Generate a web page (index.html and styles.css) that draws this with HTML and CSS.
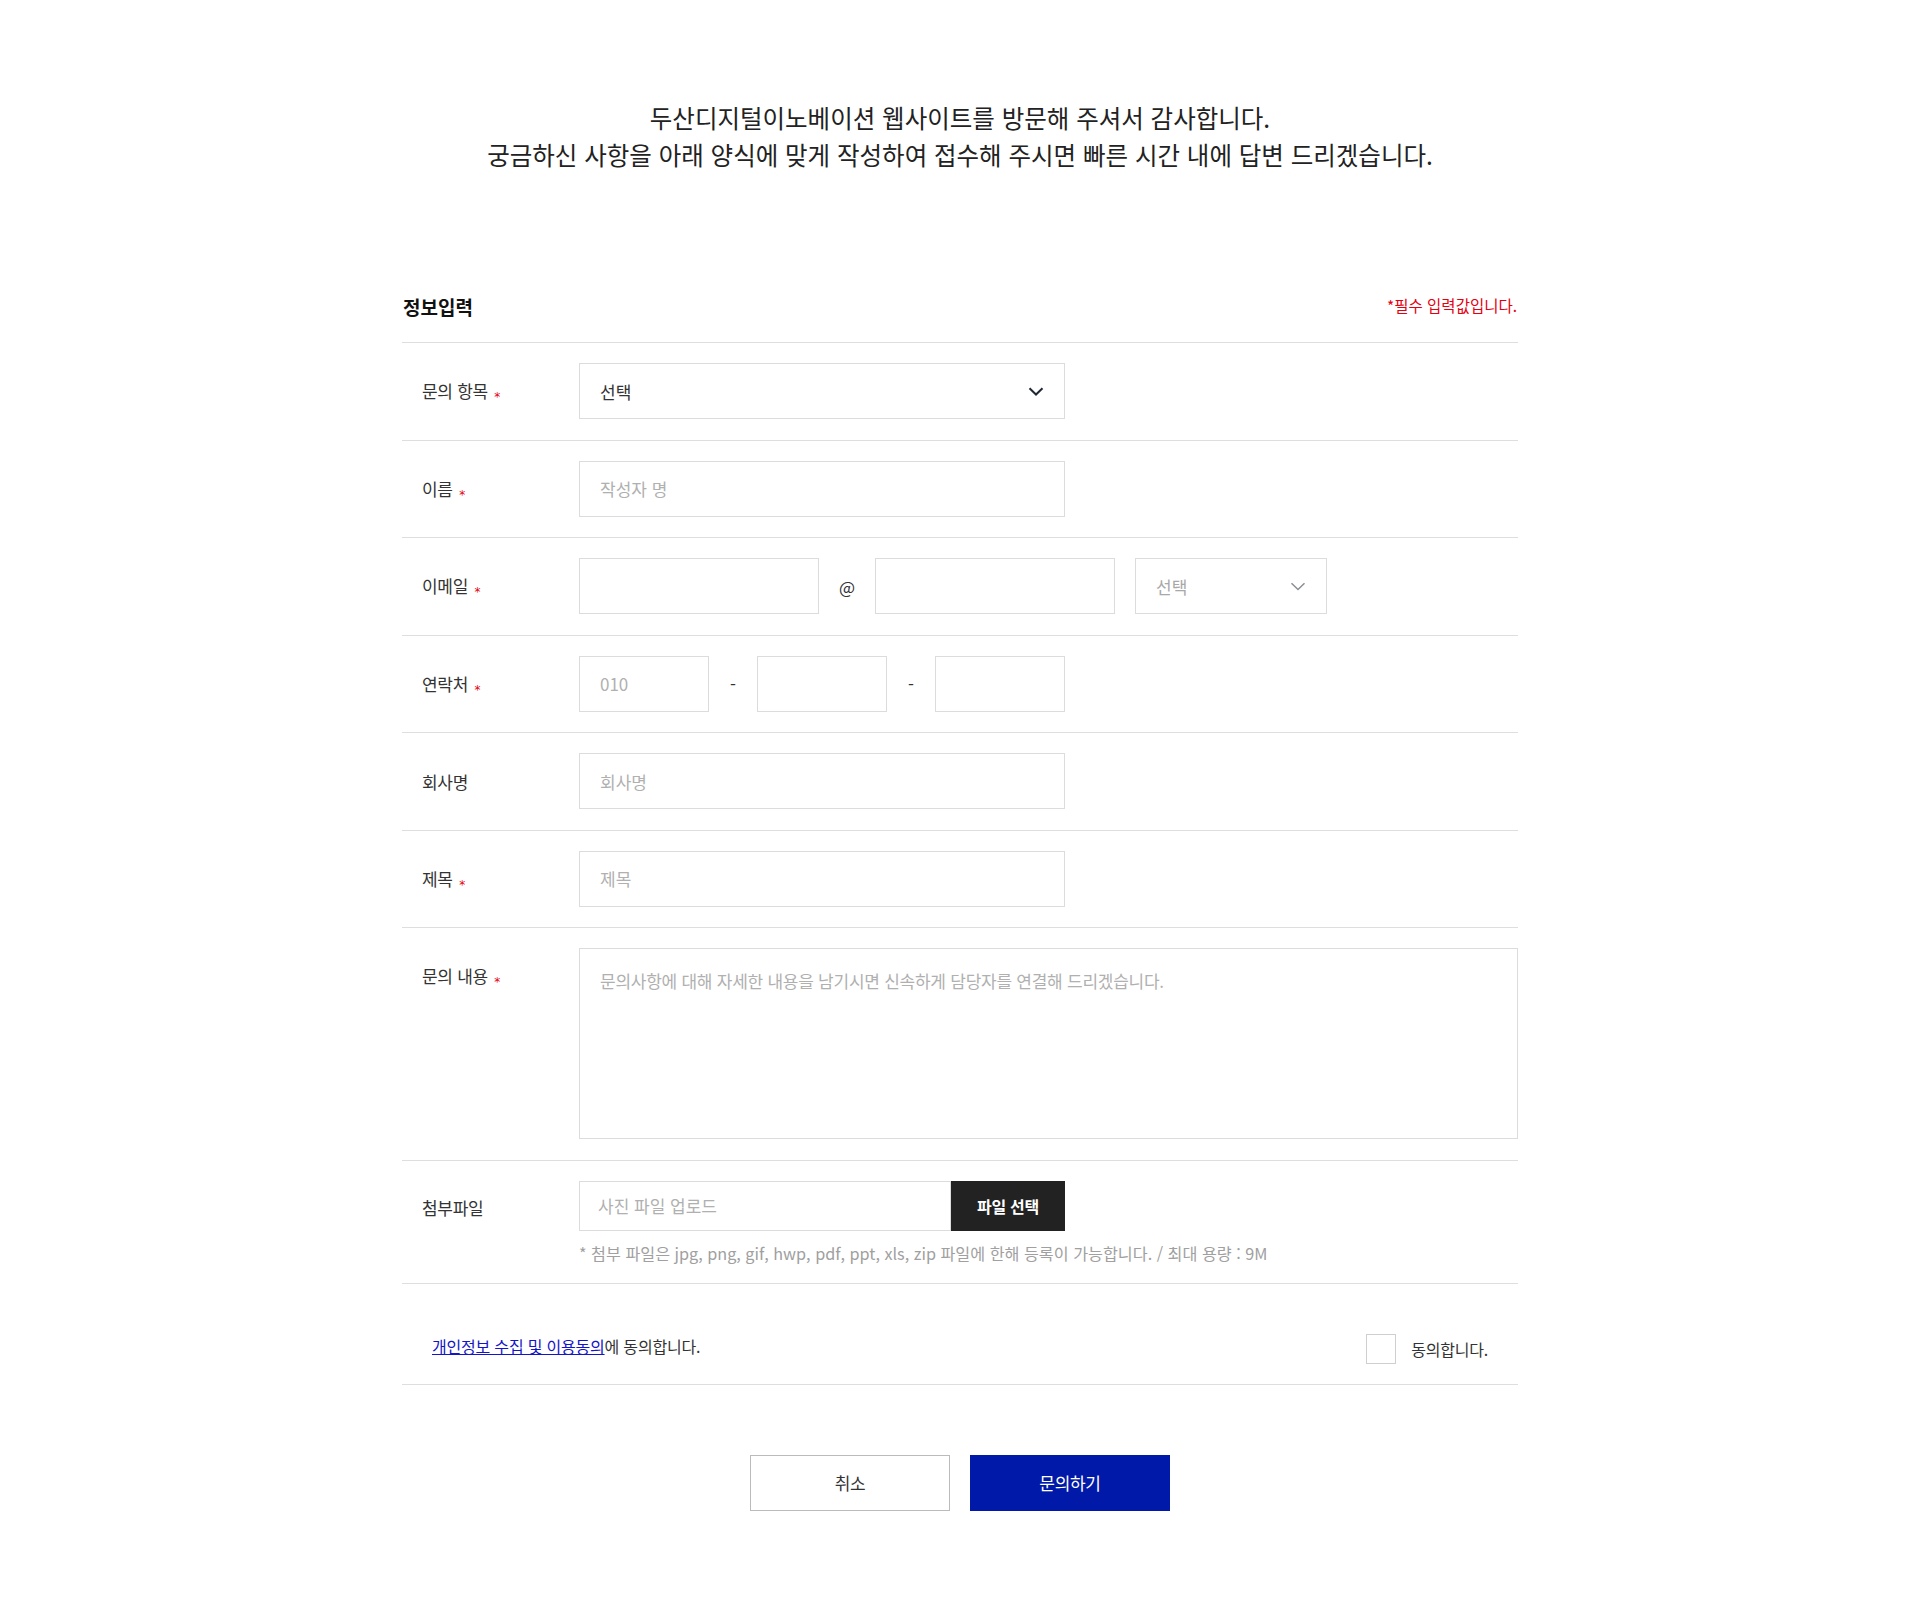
FILE: index.html
```html
<!DOCTYPE html>
<html lang="ko">
<head>
<meta charset="utf-8">
<title>문의하기</title>
<link rel="stylesheet" href="styles.css">
</head>
<body>
<div class="page">
  <div class="intro">
    <p>두산디지털이노베이션 웹사이트를 방문해 주셔서 감사합니다.</p>
    <p>궁금하신 사항을 아래 양식에 맞게 작성하여 접수해 주시면 빠른 시간 내에 답변 드리겠습니다.</p>
  </div>

  <section class="section">
    <div class="section-head">
      <h2 class="section-title">정보입력</h2>
      <span class="req-note">*필수 입력값입니다.</span>
    </div>

    <div class="form">
      <div class="row">
        <div class="label">문의 항목 <span class="star">*</span></div>
        <div class="field">
          <div class="select select-wide">
            <span class="select-text">선택</span>
            <svg class="chev" width="16" height="9" viewBox="0 0 16 9"><path d="M1.5 1.2 L8 7.5 L14.5 1.2" fill="none" stroke="#1f2833" stroke-width="2"/></svg>
          </div>
        </div>
      </div>

      <div class="row">
        <div class="label">이름 <span class="star">*</span></div>
        <div class="field">
          <input class="input input-wide" type="text" placeholder="작성자 명">
        </div>
      </div>

      <div class="row">
        <div class="label">이메일 <span class="star">*</span></div>
        <div class="field">
          <input class="input input-mail" type="text">
          <span class="at">@</span>
          <input class="input input-mail" type="text">
          <div class="select select-mail">
            <span class="select-text muted">선택</span>
            <svg class="chev" width="16" height="9" viewBox="0 0 16 9"><path d="M1.5 1.2 L8 7.5 L14.5 1.2" fill="none" stroke="#8a8f96" stroke-width="1.5"/></svg>
          </div>
        </div>
      </div>

      <div class="row">
        <div class="label">연락처 <span class="star">*</span></div>
        <div class="field">
          <input class="input input-tel" type="text" placeholder="010">
          <span class="dash">-</span>
          <input class="input input-tel" type="text">
          <span class="dash">-</span>
          <input class="input input-tel" type="text">
        </div>
      </div>

      <div class="row">
        <div class="label">회사명</div>
        <div class="field">
          <input class="input input-wide" type="text" placeholder="회사명">
        </div>
      </div>

      <div class="row">
        <div class="label">제목 <span class="star">*</span></div>
        <div class="field">
          <input class="input input-wide" type="text" placeholder="제목">
        </div>
      </div>

      <div class="row row-top">
        <div class="label label-top">문의 내용 <span class="star">*</span></div>
        <div class="field field-grow">
          <textarea class="textarea" placeholder="문의사항에 대해 자세한 내용을 남기시면 신속하게 담당자를 연결해 드리겠습니다."></textarea>
        </div>
      </div>

      <div class="row row-top row-file">
        <div class="label label-file">첨부파일</div>
        <div class="field field-col">
          <div class="file-line">
            <input class="input input-file" type="text" placeholder="사진 파일 업로드">
            <button class="file-btn" type="button">파일 선택</button>
          </div>
          <p class="hint">* 첨부 파일은 jpg, png, gif, hwp, pdf, ppt, xls, zip 파일에 한해 등록이 가능합니다. / 최대 용량 : 9M</p>
        </div>
      </div>

      <div class="agree">
        <p class="agree-text"><a href="#" class="agree-link">개인정보 수집 및 이용동의</a>에 동의합니다.</p>
        <label class="agree-check"><input type="checkbox" class="check"><span>동의합니다.</span></label>
      </div>
    </div>

    <div class="actions">
      <button class="btn btn-cancel" type="button">취소</button>
      <button class="btn btn-submit" type="button">문의하기</button>
    </div>
  </section>
</div>
</body>
</html>
```

FILE: styles.css
```css
* { box-sizing: border-box; }
html, body { margin: 0; padding: 0; background: #fff; }
body {
  font-family: "Noto Sans CJK KR", "Noto Sans", sans-serif;
  color: #333;
}
.page { padding: 99px 0 100px; }

.intro {
  text-align: center;
  font-size: 24.5px;
  line-height: 37px;
  color: #222;
}
.intro p { margin: 0; }

.section {
  width: 1116px;
  margin: 120px auto 0;
}
.section-head {
  display: flex;
  justify-content: space-between;
  align-items: center;
  height: 28px;
  margin-bottom: 21px;
}
.section-title {
  margin: -2px 0 0;
  font-size: 19px;
  font-weight: 700;
  color: #111;
  padding-left: 1px;
}
.req-note {
  font-size: 15.5px;
  color: #e5000f;
  padding-right: 1px;
  margin-top: -5px;
}

.form { border-top: 1px solid #dedede; }
.row {
  display: flex;
  align-items: center;
  padding: 20px 0 20.5px;
  border-bottom: 1px solid #dedede;
}
.row-top { align-items: flex-start; }
.label {
  width: 177px;
  flex: none;
  padding-left: 20px;
  font-size: 17px;
  letter-spacing: -0.3px;
  color: #333;
}
.label-top { padding-top: 15px; }
.label-file { padding-top: 14px; }
.star {
  color: #e5000f;
  font-family: "DejaVu Sans", sans-serif;
  font-size: 12px;
  margin-left: 2px;
  vertical-align: -3px;
}

.field {
  display: flex;
  align-items: center;
}
.field-grow { flex: 1; }
.field-col { flex-direction: column; align-items: flex-start; }

.input {
  height: 56px;
  border: 1px solid #dcdcdc;
  padding: 0 20px;
  font-family: inherit;
  font-size: 17px;
  color: #333;
  background: #fff;
  outline: none;
}
.input::placeholder, .textarea::placeholder { color: #b0b0b0; }
.input-wide { width: 486px; }
.input-mail { width: 240px; }
.input-tel { width: 130px; }

.at {
  width: 56px;
  text-align: center;
  font-size: 17px;
  color: #333;
}
.dash {
  width: 48px;
  text-align: center;
  font-size: 17px;
  color: #333;
}

.select {
  height: 56px;
  border: 1px solid #dcdcdc;
  display: flex;
  align-items: center;
  justify-content: space-between;
  padding: 0 20px;
  font-size: 17px;
  background: #fff;
}
.select-wide { width: 486px; }
.select-mail { width: 192px; margin-left: 20px; }
.select-text { color: #333; }
.select-text.muted { color: #a8a8a8; }
.chev { display: block; }

.textarea {
  width: 100%;
  height: 191px;
  border: 1px solid #dcdcdc;
  padding: 20px 20px;
  font-family: inherit;
  font-size: 17px;
  line-height: 24px;
  letter-spacing: -0.25px;
  resize: none;
  outline: none;
  display: block;
}

.row-file { padding-bottom: 20px; }
.file-line { display: flex; }
.input-file { width: 372px; height: 50px; padding: 0 18px; }
.file-btn {
  width: 114px;
  height: 50px;
  border: 0;
  background: #222;
  color: #fff;
  font-family: inherit;
  font-size: 16px;
  font-weight: 700;
  letter-spacing: -0.3px;
}
.hint {
  margin: 12px 0 0;
  font-size: 16.2px;
  line-height: 20px;
  color: #a0a0a0;
}

.agree {
  display: flex;
  justify-content: space-between;
  align-items: center;
  padding: 50px 30px 20px;
  border-bottom: 1px solid #dedede;
}
.agree-text {
  margin: 0 0 6px;
  font-size: 16px;
  letter-spacing: -0.2px;
  color: #333;
}
.agree-link { color: #1414c8; text-decoration: underline; }
.agree-check {
  display: flex;
  align-items: center;
  font-size: 16px;
  letter-spacing: -0.2px;
  color: #333;
}
.check {
  appearance: none;
  -webkit-appearance: none;
  width: 30px;
  height: 30px;
  margin: 0 15px 0 0;
  border: 1px solid #cfcfcf;
  background: #fff;
}

.actions {
  display: flex;
  justify-content: center;
  gap: 20px;
  margin-top: 70px;
}
.btn {
  width: 200px;
  height: 56px;
  font-family: inherit;
  font-size: 17px;
  letter-spacing: -0.3px;
  cursor: pointer;
}
.btn-cancel {
  background: #fff;
  border: 1px solid #bbb;
  color: #333;
}
.btn-submit {
  background: #0019a9;
  border: 0;
  color: #fff;
}
```
